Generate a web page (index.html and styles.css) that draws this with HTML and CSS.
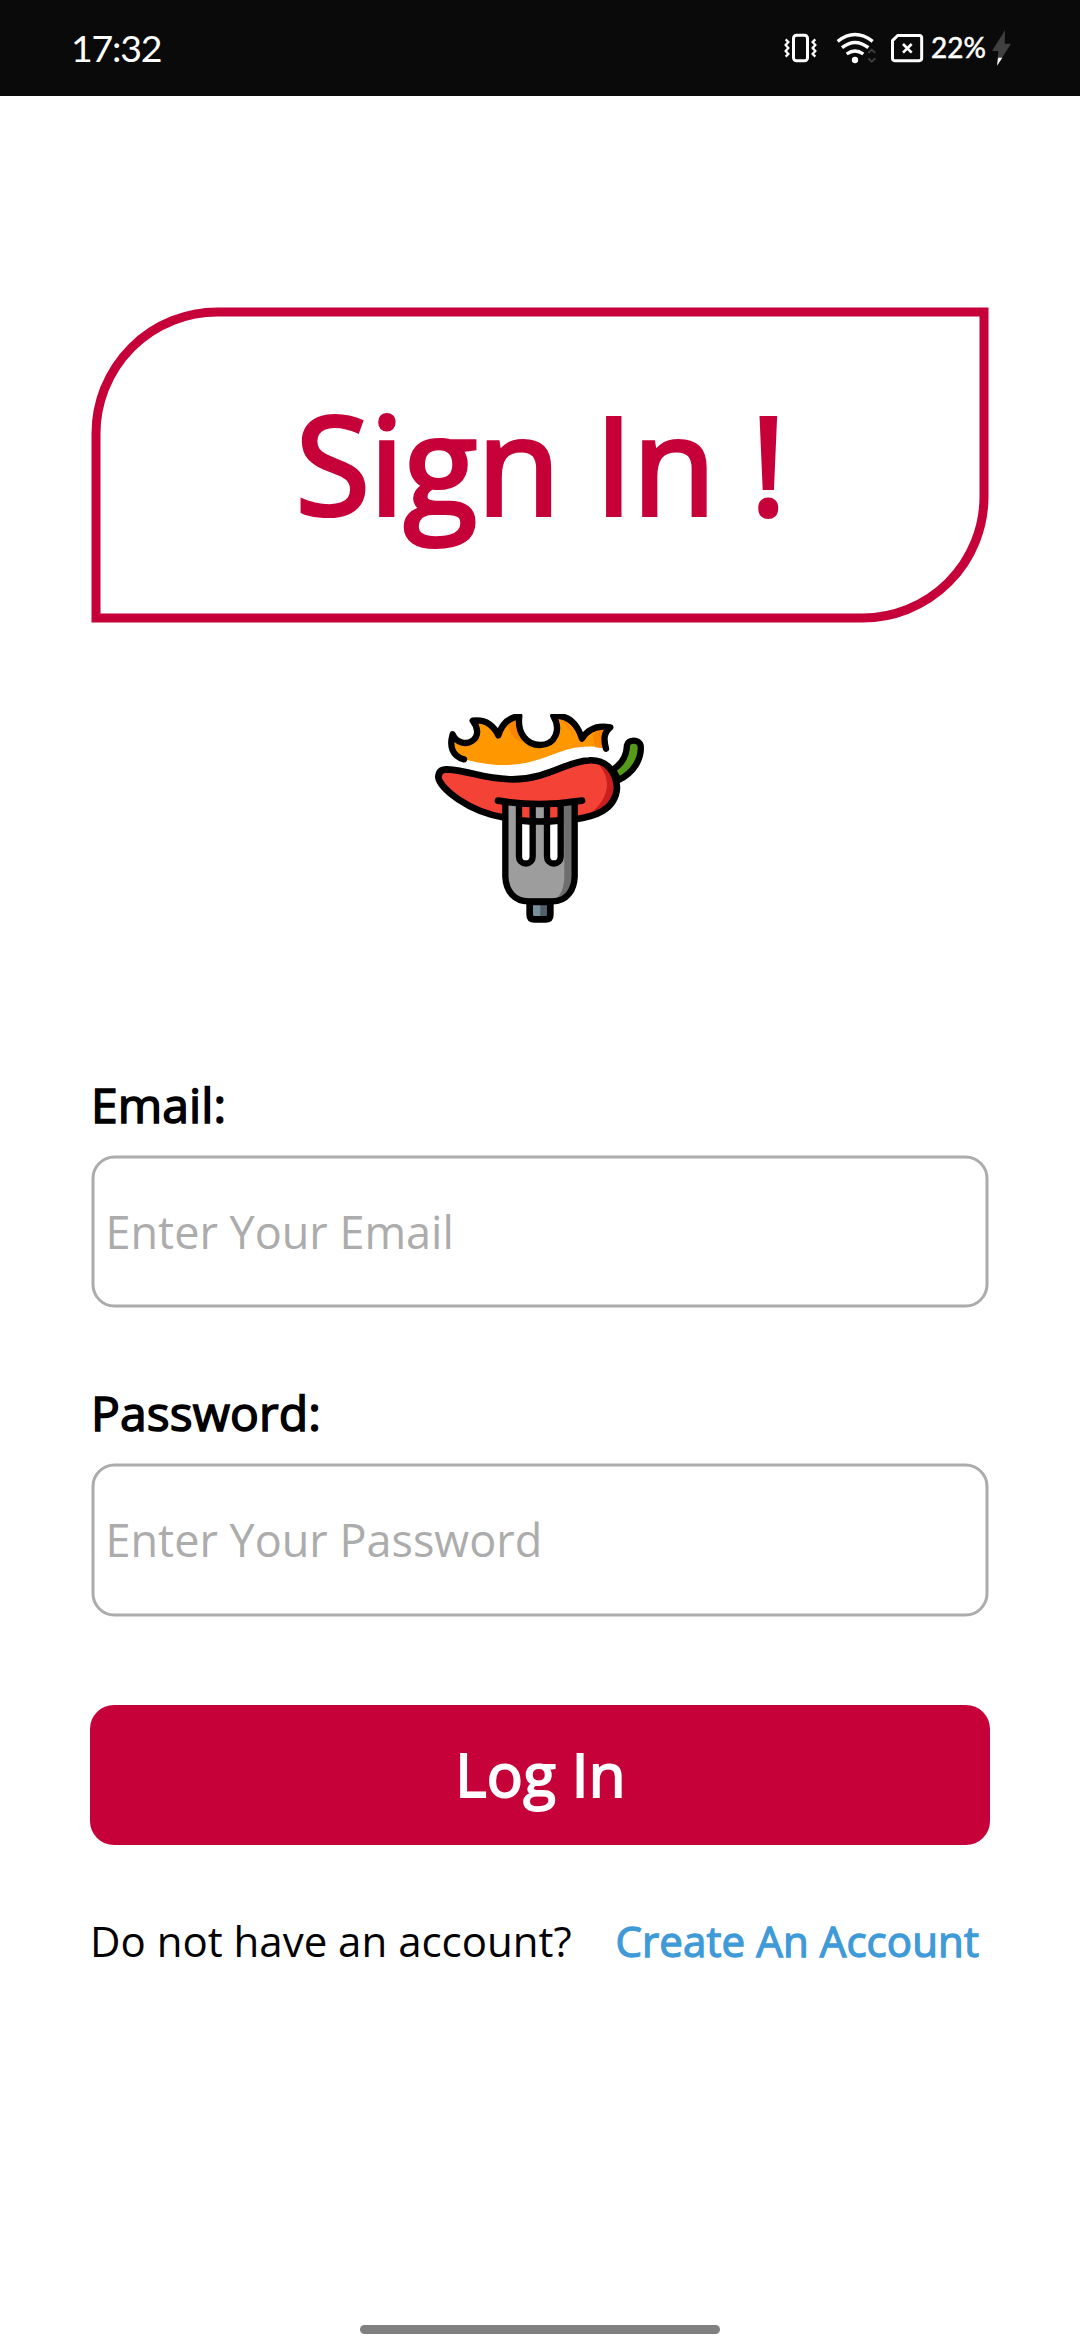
FILE: index.html
```html
<!DOCTYPE html>
<html lang="en">
<head>
<meta charset="utf-8">
<title>Sign In</title>
<link rel="stylesheet" href="styles.css">
</head>
<body>
<div class="screen">
  <header class="status">
    <span class="clock">17:32</span>
    <div class="status-icons">
      <svg class="status-svg" viewBox="0 0 510 240" width="170" height="80" fill="none" stroke="#fff">
        <rect x="100.500" y="75.500" width="42" height="77" rx="9" stroke-width="9"/>
        <path d="M77 88l8 8-8 9 8 9-8 9 8 9-8 8M166 88l-8 8 8 9-8 9 8 9-8 9 8 8" stroke-width="7"/>
        <path d="M233 94Q285 53 338 94M246 113Q285 82 325 113M260 132Q285 114 310 132" stroke-width="10"/>
        <circle cx="285" cy="150" r="9.500" fill="#fff" stroke="none"/>
        <path d="M325 129l10-10 11 10M325 145l10 10 11-10" stroke="#3c3c3c" stroke-width="6"/>
        <path d="M413 76.500H478Q485 76.500 485 83.500V145Q485 152 478 152H404Q397.500 152 397.500 145V92Z" stroke-width="9" stroke-linejoin="round"/>
        <path d="M429 102l26 26M455 102l-26 26" stroke-width="8"/>
      </svg>
      <span class="battery">22%</span>
      <svg class="bolt" viewBox="690 55 66 120" width="22" height="40">
        <path d="M735 62L696 124H715L711 168L753 102H734Z" fill="#404040"/>
        <path d="M714 144H727L711 168Z" fill="#fff"/>
      </svg>
    </div>
  </header>

  <main class="content">
    <h1 class="title">Sign In !</h1>

    <svg class="logo" viewBox="0 0 720 708" width="240" height="236">
      <clipPath id="logo-bounds"><rect x="45" y="42" width="627" height="627"/></clipPath>
      <g clip-path="url(#logo-bounds)">
      <path d="M132 178Q250 210 340 183C410 166 460 125 555 145L550 112L575 82Q520 70 486 116Q467 45 400 48C430 90 400 135 360 135C310 135 283 85 298 48Q250 55 235 106Q210 60 158 62C180 100 165 130 133 129Q108 127 98 103Q85 155 132 178Z" fill="#ff9800"/>
      <path d="M298 50Q272 60 264 78Q275 115 310 130Q282 85 298 50ZM400 48Q445 70 462 112Q450 62 400 48ZM575 82Q535 80 518 108L526 142L555 145L550 112Z" fill="#fb8500"/>
      <path d="M132 178C95 168 88 137 98 103C107 126 137 136 156 123C180 107 172 80 158 62Q210 55 235 106Q250 55 298 48C291 100 320 135 360 135C405 135 425 90 400 48Q463 43 486 116C510 77 545 77 571 82C550 99 551 120 558 146" fill="none" stroke="#000" stroke-width="19" stroke-linecap="round" stroke-linejoin="round"/>
      <path d="M578 209C609 190 620 165 621 135C624 117 658 117 662 137C666 178 640 218 596 240Z" fill="#559a18" stroke="#000" stroke-width="19" stroke-linejoin="round"/>
      <path d="M80 208C160 213 180 237 277 238C390 236 440 183 507 181C560 178 588 215 591 263C587 330 525 350 460 359Q360 370 255 353C145 336 60 265 55 232Q56 208 80 208Z" fill="#f44336"/>
      <path d="M525 182C570 185 591 220 591 263C589 310 548 333 510 342C590 276 560 213 525 182Z" fill="#c91f1f"/>
      <path d="M80 208C160 213 180 237 277 238C390 236 440 183 507 181C560 178 588 215 591 263C587 330 525 350 460 359Q360 370 255 353C145 336 60 265 55 232Q56 208 80 208Z" fill="none" stroke="#000" stroke-width="20" stroke-linejoin="round"/>
      <path d="M256 306V530C258 575 284 604 325 604H397C440 604 463 570 464 530V306Q360 320 256 306Z" fill="#9d9d9d"/>
      <path d="M432 312H464V530C463 575 440 600 397 604Q432 585 433 530Z" fill="#6e6e6e"/>
      <path d="M296 305H338V474A21 21 0 0 1 296 474ZM380 305H422V474A21 21 0 0 1 380 474Z" fill="#fff"/>
      <path d="M296 312H338V365H296ZM380 312H422V365H380Z" fill="#f44336"/>
      <path d="M296 361Q360 368 422 361" fill="none" stroke="#000" stroke-width="20"/>
      <path d="M234 302Q360 322 486 302" fill="none" stroke="#000" stroke-width="20" stroke-linecap="round"/>
      <path d="M256 310V530C258 575 284 604 325 604H397C440 604 463 570 464 530V310M297 312V470A20.500 20.500 0 0 0 338 470V312M381 312V470A20.500 20.500 0 0 0 422 470V312" fill="none" stroke="#000" stroke-width="19"/>
      <path d="M329 606H392V644Q392 658 378 658H343Q329 658 329 644Z" fill="#78909c"/>
      <path d="M361 606H392V650H361Z" fill="#526069"/>
      <path d="M329 606H391V644Q391 658 377 658H343Q329 658 329 644Z" fill="none" stroke="#000" stroke-width="20"/>
      </g>
    </svg>

    <form class="form">
      <label class="label" for="email">Email:</label>
      <input class="field" id="email" type="text" placeholder="Enter Your Email">
      <label class="label label-second" for="password">Password:</label>
      <input class="field field-second" id="password" type="password" placeholder="Enter Your Password">
      <button class="login" type="button">Log In</button>
    </form>

    <p class="signup">
      <span>Do not have an account?</span>
      <a class="link">Create An Account</a>
    </p>
  </main>

  <div class="nav"><div class="nav-pill"></div></div>
</div>
</body>
</html>
```

FILE: styles.css
```css
* { box-sizing: border-box; }

body {
  margin: 0;
  background: #fff;
  font-family: "Open Sans", "Noto Sans", sans-serif;
  color: #000;
}

.screen {
  display: flex;
  flex-direction: column;
  width: 1080px;
  height: 2340px;
  background: #fff;
}

.status {
  display: flex;
  justify-content: space-between;
  height: 96px;
  padding: 0 68px 0 71px;
  background: #0a0a0a;
  color: #fff;
  font-family: Lato, sans-serif;
}

.clock {
  font-size: 37.500px;
  line-height: 96px;
  letter-spacing: -1.200px;
}

.status-icons {
  display: flex;
  align-items: flex-start;
  padding-top: 10px;
}

.battery {
  width: 60px;
  padding-left: 1px;
  font-size: 28px;
  line-height: 74px;
  -webkit-text-stroke: 0.500px #fff;
}

.bolt { margin-top: 18px; }

.content {
  display: flex;
  flex-direction: column;
  flex: 1;
  padding: 211px 90px 0;
}

.title {
  display: flex;
  align-items: center;
  justify-content: center;
  width: 897px;
  height: 315px;
  margin: 0 1px;
  padding: 0 0 6px 2px;
  border: 9px solid #c60038;
  border-radius: 126px 0 126px 0;
  color: #c60038;
  font-size: 135px;
  font-weight: 400;
  line-height: 184px;
  -webkit-text-stroke: 4.200px #c60038;
  transform: translate(0.500px, 0.500px);
}

.logo {
  align-self: center;
  margin-top: 78px;
}

.form {
  display: flex;
  flex-direction: column;
  margin-top: 137px;
}

.label {
  padding-left: 1px;
  font-size: 48px;
  line-height: 64px;
  letter-spacing: 0.100px;
  -webkit-text-stroke: 1.500px #000;
}

.label-second { margin-top: 74px; }

.field {
  width: 897px;
  height: 152px;
  margin: 18px 1px 0;
  padding: 0 11px 2px;
  border: 3px solid #acacac;
  border-radius: 23px;
  background: #fff;
  font: 45px "Open Sans", "Noto Sans", sans-serif;
  transform: translate(0.500px, 0.500px);
}

.field-second { height: 153px; }

.field::placeholder {
  color: #acacac;
  opacity: 1;
}

.login {
  height: 140px;
  margin-top: 89px;
  padding: 0 0 3px 1px;
  border: 0;
  border-radius: 24px;
  background: #c60038;
  color: #fff;
  font: 60px "Open Sans", "Noto Sans", sans-serif;
  letter-spacing: 0.200px;
  -webkit-text-stroke: 1.900px #fff;
}

.signup {
  display: flex;
  justify-content: space-between;
  margin: 68px 0 0;
  padding: 0 11px 0 0;
  font-size: 42px;
  line-height: 56px;
}

.link {
  color: #3f9ad8;
  letter-spacing: 0.100px;
  -webkit-text-stroke: 1.300px #3f9ad8;
}

.nav {
  display: flex;
  justify-content: center;
  padding-bottom: 6px;
}

.nav-pill {
  width: 360px;
  height: 9px;
  border-radius: 5px;
  background: #808080;
}
```
